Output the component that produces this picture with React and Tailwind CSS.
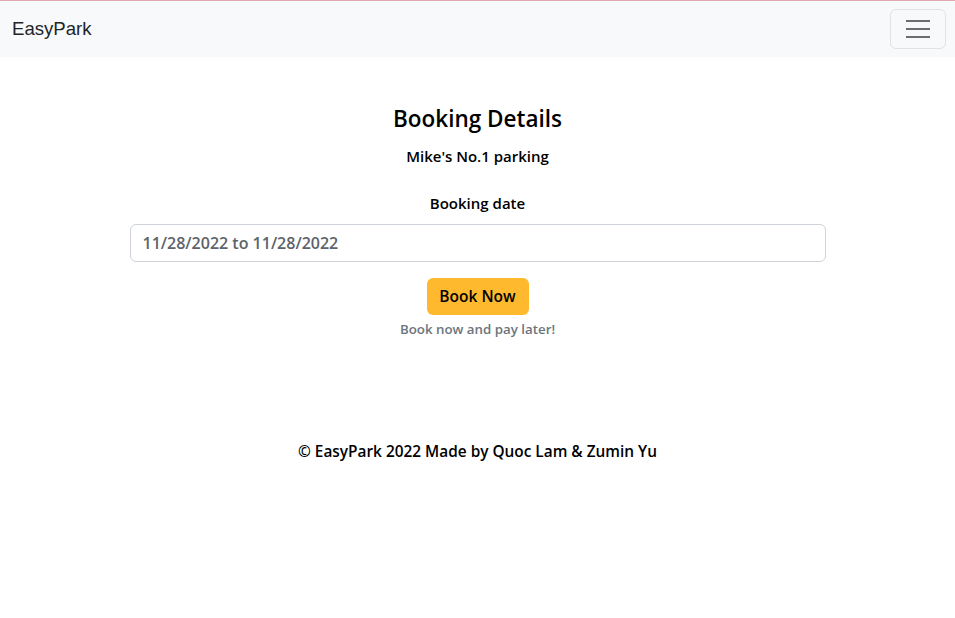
export default function App() {
  return (
    <div className="min-h-[618px] bg-white text-black" style={{ fontFamily: '"Open Sans", "Noto Sans", sans-serif' }}>
      <nav className="border-t border-[#e2a7b0] bg-[#f8f9fa] h-[57px] flex items-center justify-between pl-3 pr-[9px]">
        <span className="text-[18.6px] text-[#212529] font-['Liberation_Sans',sans-serif]">EasyPark</span>
        <button className="w-[56px] h-[40px] border border-[#e1e2e3] rounded-[6px] flex flex-col items-center justify-center gap-[6px]">
          <span className="block w-[24px] h-[2px] bg-[#6c6d6e]" />
          <span className="block w-[24px] h-[2px] bg-[#6c6d6e]" />
          <span className="block w-[24px] h-[2px] bg-[#6c6d6e]" />
        </button>
      </nav>

      <main className="w-[696px] mx-auto flex flex-col items-center pt-[47px]">
        <h4 className="text-[22.5px] font-semibold leading-[30px]">Booking Details</h4>
        <p className="mt-[11px] text-[15px] leading-[22px] font-semibold">Mike's No.1 parking</p>
        <label className="mt-[25px] text-[15px] leading-[22px] font-semibold">Booking date</label>
        <input
          readOnly
          value="11/28/2022 to 11/28/2022"
          className="mt-[10px] w-full h-[38px] px-3 border border-[#ced4da] rounded-[6px] text-[16px] font-semibold text-[#5c636a] outline-none"
        />
        <button className="mt-[16px] h-[37px] w-[102px] bg-[#ffb92f] rounded-[6px] text-[15.5px] font-semibold">Book Now</button>
        <p className="mt-[4px] text-[13.3px] leading-[20px] font-semibold text-[#6c757d]">Book now and pay later!</p>
        <p className="mt-[102px] text-[15.4px] leading-[22px] font-semibold">© EasyPark 2022 Made by Quoc Lam &amp; Zumin Yu</p>
      </main>
    </div>
  );
}
